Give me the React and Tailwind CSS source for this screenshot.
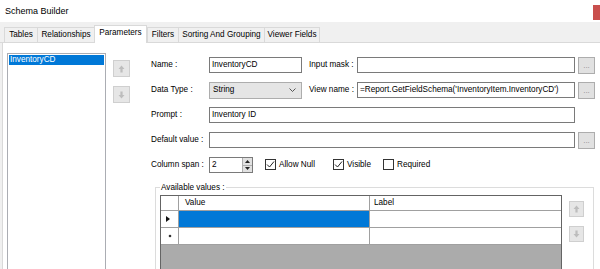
import React from "react";

function ArrowBtn({ dir, w = 17, h = 17 }) {
  return (
    <div
      className="bg-[#e6e6e6] border border-[#cfcfcf] flex items-center justify-center"
      style={{ width: w, height: h }}
    >
      <svg width="7" height="8" viewBox="0 0 7 8">
        {dir === "up" ? (
          <path d="M3.5 0.5 L6.5 4 H4.6 V7.5 H2.4 V4 H0.5 Z" fill="#bdbdbd" />
        ) : (
          <path d="M3.5 7.5 L6.5 4 H4.6 V0.5 H2.4 V4 H0.5 Z" fill="#bdbdbd" />
        )}
      </svg>
    </div>
  );
}

function DotsBtn() {
  return (
    <div className="ml-[3px] w-[17px] h-[17px] bg-[#e1e1e1] border border-[#adadad] flex items-end justify-center pb-[3px] text-[#8a8a8a] leading-none text-[8px]">
      ...
    </div>
  );
}

function Label({ children, w = 58 }) {
  return (
    <div className="shrink-0 whitespace-nowrap" style={{ width: w }}>
      {children}
    </div>
  );
}

function TextBox({ w, children }) {
  return (
    <div
      className="h-[16px] border border-[#7a7a7a] bg-white pl-[2px] flex items-center whitespace-nowrap overflow-hidden"
      style={{ width: w }}
    >
      {children}
    </div>
  );
}

function Check({ checked, label, w }) {
  return (
    <div className="flex items-center" style={{ width: w }}>
      <div className="w-[11px] h-[11px] border border-[#333333] bg-white flex items-center justify-center">
        {checked && (
          <svg width="9" height="9" viewBox="0 0 9 9">
            <path d="M1 4.5 L3.5 7 L8 1.5" fill="none" stroke="#222" strokeWidth="1" />
          </svg>
        )}
      </div>
      <span className="ml-[3px]">{label}</span>
    </div>
  );
}

const tabs = [
  ["Tables", 33],
  ["Relationships", 57],
  ["Parameters", 53],
  ["Filters", 31],
  ["Sorting And Grouping", 86],
  ["Viewer Fields", 56],
];

export default function App() {
  return (
    <div className="w-[600px] h-[269px] overflow-hidden bg-white font-['Liberation_Sans',Arial,sans-serif] text-[8.2px] text-black flex flex-col">
      {/* title bar */}
      <div className="h-[22px] shrink-0 flex justify-between pl-[5px]">
        <span className="text-[9px] leading-[22px]">Schema Builder</span>
        <div className="w-[7px] h-[15px] mt-[5px] bg-[#c94f4d]" />
      </div>

      {/* tab strip */}
      <div className="h-[21px] shrink-0 bg-[#f0f0f0] flex items-end pl-[4px] border-b border-[#d9d9d9]">
        {tabs.map(([t, w], i) => {
          const sel = t === "Parameters";
          const last = i === tabs.length - 1;
          return (
            <div
              key={t}
              style={{ width: w }}
              className={
                sel
                  ? "h-[18px] -mb-[1px] bg-white border border-b-0 border-[#d9d9d9] flex items-center justify-center pb-[2px] relative z-10"
                  : last
                  ? "h-[15px] bg-[#f0f0f0] border-t border-l border-r border-[#d9d9d9] flex items-center justify-center"
                  : "h-[15px] bg-[#f0f0f0] border-t border-l border-[#d9d9d9] flex items-center justify-center"
              }
            >
              {t}
            </div>
          );
        })}
      </div>

      {/* body */}
      <div className="flex-1 min-h-0 flex bg-[#f0f0f0] pl-[2px]">
        <div className="flex-1 bg-white border-l border-[#d9d9d9] flex min-h-0">
          {/* list box */}
          <div className="ml-[4px] mt-[10px] w-[99px] h-[240px] shrink-0 border border-[#abadb3] bg-white pt-[1px] px-[1px]">
            <div className="h-[10px] bg-[#0078d7] text-white leading-[10px] pl-[1px]">InventoryCD</div>
          </div>

          {/* up/down */}
          <div className="ml-[7px] pt-[17px] flex flex-col gap-[9px] shrink-0">
            <ArrowBtn dir="up" />
            <ArrowBtn dir="down" />
          </div>

          {/* form */}
          <div className="ml-[21px] pt-[14px] flex flex-col shrink-0">
            <div className="flex flex-col gap-[9px]">
              <div className="h-[16px] flex items-center">
                <Label>Name :</Label>
                <TextBox w={93}>InventoryCD</TextBox>
                <div className="ml-[7px]">
                  <Label w={48}>Input mask :</Label>
                </div>
                <TextBox w={218} />
                <DotsBtn />
              </div>

              <div className="h-[16px] flex items-center">
                <Label>Data Type :</Label>
                <div className="w-[93px] h-[17px] border border-[#adadad] bg-[#e5e5e5] flex items-center justify-between pl-[3px] pr-[5px]">
                  <span>String</span>
                  <svg width="7" height="4" viewBox="0 0 7 4">
                    <path d="M0.5 0.5 L3.5 3.5 L6.5 0.5" fill="none" stroke="#444" strokeWidth="0.9" />
                  </svg>
                </div>
                <div className="ml-[7px]">
                  <Label w={48}>View name :</Label>
                </div>
                <TextBox w={218}>=Report.GetFieldSchema('InventoryItem.InventoryCD')</TextBox>
                <DotsBtn />
              </div>

              <div className="h-[16px] flex items-center">
                <Label>Prompt :</Label>
                <TextBox w={366}>Inventory ID</TextBox>
              </div>

              <div className="h-[16px] flex items-center">
                <Label>Default value :</Label>
                <TextBox w={366} />
                <DotsBtn />
              </div>

              <div className="h-[16px] flex items-center">
                <Label>Column span :</Label>
                <div className="w-[44px] h-[16px] border border-[#7a7a7a] bg-white flex items-center justify-between">
                  <span className="pl-[2px]">2</span>
                  <div className="w-[10px] h-full flex flex-col border-l border-[#adadad]">
                    <div className="flex-1 bg-[#e1e1e1] border-b border-[#adadad] flex items-center justify-center">
                      <svg width="5" height="3" viewBox="0 0 5 3"><path d="M0 3 L2.5 0 L5 3 Z" fill="#222" /></svg>
                    </div>
                    <div className="flex-1 bg-[#e1e1e1] flex items-center justify-center">
                      <svg width="5" height="3" viewBox="0 0 5 3"><path d="M0 0 L2.5 3 L5 0 Z" fill="#222" /></svg>
                    </div>
                  </div>
                </div>
                <div className="ml-[12px] flex items-center">
                  <Check checked label="Allow Null" w={68} />
                  <Check checked label="Visible" w={50} />
                  <Check label="Required" w={80} />
                </div>
              </div>
            </div>

            {/* group box */}
            <fieldset className="ml-[4px] mt-[8px] w-[439px] h-[120px] border border-[#dcdcdc] pl-[4px]">
              <legend className="px-[1px] leading-[13px]">Available values :</legend>
              <div className="flex mt-[1px]">
                <div className="w-[402px] h-[100px] shrink-0 border border-[#646464] bg-[#ababab] flex flex-col">
                  <div className="h-[15px] flex bg-white border-b border-[#a0a0a0]">
                    <div className="w-[18px] border-r border-[#a0a0a0]" />
                    <div className="w-[191px] border-r border-[#a0a0a0] pl-[6px] leading-[14px]">Value</div>
                    <div className="flex-1 pl-[4px] leading-[14px]">Label</div>
                  </div>
                  <div className="h-[17px] flex bg-white border-b border-[#a0a0a0]">
                    <div className="w-[18px] border-r border-[#a0a0a0] flex items-center pl-[5px]">
                      <svg width="4" height="6" viewBox="0 0 4 6"><path d="M0 0 L4 3 L0 6 Z" fill="#111" /></svg>
                    </div>
                    <div className="w-[191px] border-r border-[#a0a0a0] bg-[#0078d7]" />
                    <div className="flex-1" />
                  </div>
                  <div className="h-[17px] flex bg-white border-b border-[#a0a0a0]">
                    <div className="w-[18px] border-r border-[#a0a0a0] flex items-center pl-[7px]">
                      <svg width="4" height="4" viewBox="0 0 4 4"><circle cx="2" cy="2" r="1.3" fill="#333" /></svg>
                    </div>
                    <div className="w-[191px] border-r border-[#a0a0a0]" />
                    <div className="flex-1" />
                  </div>
                </div>
                <div className="ml-[7px] mt-[6px] flex flex-col gap-[9px]">
                  <ArrowBtn dir="up" w={15} h={16} />
                  <ArrowBtn dir="down" w={15} h={16} />
                </div>
              </div>
            </fieldset>
          </div>
        </div>
      </div>
    </div>
  );
}
